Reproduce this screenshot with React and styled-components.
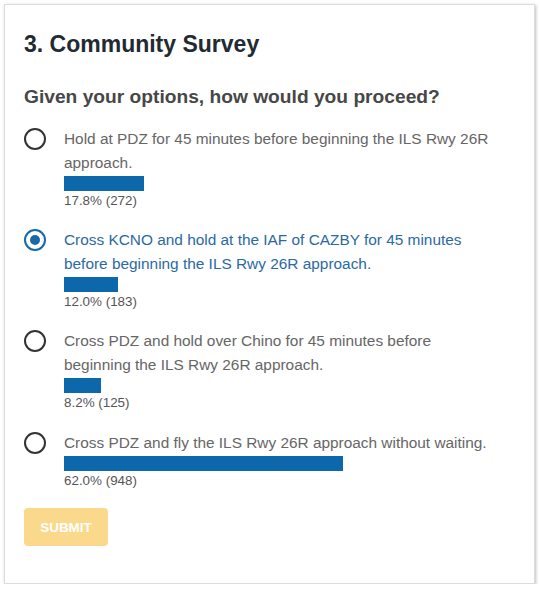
import React from "react";
import styled, { createGlobalStyle } from "styled-components";

const Global = createGlobalStyle`
  body {
    margin: 0;
    background: #fff;
    font-family: "Liberation Sans", Arial, sans-serif;
  }
`;

const Card = styled.div`
  margin: 4px 0 0 4px;
  width: 531px;
  box-sizing: border-box;
  border: 1px solid #dcdcdc;
  box-shadow: 1px 1px 3px rgba(0, 0, 0, 0.25);
  padding: 25px 20px 37px 19px;
  background: #fff;
`;

const Title = styled.h2`
  margin: 0;
  font-size: 23px;
  line-height: 28px;
  font-weight: bold;
  color: #222a32;
`;

const Question = styled.h3`
  margin: 27px 0 0;
  font-size: 19.2px;
  line-height: 24px;
  font-weight: bold;
  color: #474747;
`;

const List = styled.div`
  margin-top: 18px;
  display: flex;
  flex-direction: column;
  gap: 18px;
`;

const Option = styled.div`
  display: grid;
  grid-template-columns: 40px 1fr;
`;

const Radio = styled.span`
  margin-top: 1px;
  width: 22px;
  height: 22px;
  box-sizing: border-box;
  border-radius: 50%;
  border: 2px solid ${(p) => (p.checked ? "#1a68a6" : "#333")};
  display: flex;
  align-items: center;
  justify-content: center;

  &::after {
    content: "";
    display: ${(p) => (p.checked ? "block" : "none")};
    width: 10px;
    height: 10px;
    border-radius: 50%;
    background: #1a68a6;
  }
`;

const Body = styled.div`
  display: flex;
  flex-direction: column;
`;

const Text = styled.div`
  max-width: 434px;
  font-size: 15.4px;
  line-height: 24px;
  color: ${(p) => (p.checked ? "#2a6aa3" : "#666")};
`;

const Track = styled.div`
  margin-top: 1px;
  width: 450px;
  height: 15px;
`;

const Bar = styled.div`
  height: 100%;
  background: #0c67ab;
`;

const Count = styled.div`
  font-size: 13.4px;
  line-height: 19.2px;
  color: #555;
`;

const Submit = styled.button`
  margin-top: 18.5px;
  width: 84px;
  height: 38px;
  border: none;
  border-radius: 4px;
  background: #fad98c;
  color: #fff;
  font-family: "Liberation Sans", Arial, sans-serif;
  font-size: 13.4px;
  font-weight: bold;
  text-transform: uppercase;
  padding: 0;
`;

const options = [
  { text: "Hold at PDZ for 45 minutes before beginning the ILS Rwy 26R approach.", pct: 17.8, n: 272 },
  { text: "Cross KCNO and hold at the IAF of CAZBY for 45 minutes before beginning the ILS Rwy 26R approach.", pct: 12.0, n: 183, checked: true },
  { text: "Cross PDZ and hold over Chino for 45 minutes before beginning the ILS Rwy 26R approach.", pct: 8.2, n: 125 },
  { text: "Cross PDZ and fly the ILS Rwy 26R approach without waiting.", pct: 62.0, n: 948 },
];

export default function App() {
  return (
    <>
      <Global />
      <Card>
        <Title>3. Community Survey</Title>
        <Question>Given your options, how would you proceed?</Question>
        <List>
          {options.map((o) => (
            <Option key={o.n}>
              <Radio checked={o.checked} />
              <Body>
                <Text checked={o.checked}>{o.text}</Text>
                <Track>
                  <Bar style={{ width: `${o.pct}%` }} />
                </Track>
                <Count>
                  {o.pct.toFixed(1)}% ({o.n})
                </Count>
              </Body>
            </Option>
          ))}
        </List>
        <Submit disabled>Submit</Submit>
      </Card>
    </>
  );
}
